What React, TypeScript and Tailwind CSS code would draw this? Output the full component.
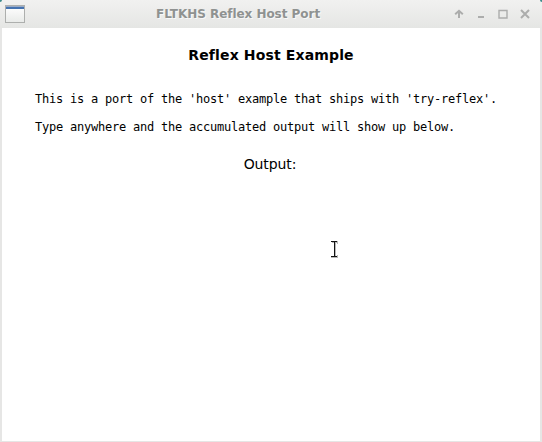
function TitleBar() {
  return (
    <header className="relative flex h-7 shrink-0 items-center justify-between bg-linear-to-b from-[#f1f1f0] to-[#e5e6e4] pl-[5px] pr-[11px]">
      <svg width="20" height="18" viewBox="0 0 20 18" shapeRendering="crispEdges">
        <defs>
          <linearGradient id="page" x1="0" y1="0" x2="0" y2="1">
            <stop offset="0" stopColor="#ffffff" />
            <stop offset="1" stopColor="#e9ebe9" />
          </linearGradient>
        </defs>
        <rect width="20" height="18" fill="#adafad" />
        <rect x="1" y="1" width="18" height="16" fill="url(#page)" />
        <rect x="1" y="1" width="18" height="1" fill="#9bacc6" />
        <rect x="1" y="2" width="18" height="2" fill="#4472b0" />
      </svg>
      <span className="mr-[2px] h-7 w-[164px] whitespace-nowrap text-left text-[12px] font-bold leading-7 tracking-[-0.04px] text-[#8f9291] [text-shadow:1px_1px_0_#f8f8f8]">
        FLTKHS Reflex Host Port
      </span>
      <svg width="78" height="12" viewBox="453 8 78 12" fill="none" stroke="#acadac" strokeWidth="2">
        <path d="M459 18V11M455.2 14.3L459 10.8L462.8 14.3" />
        <path d="M478 17H484" />
        <path d="M499 10.5H507V18H499Z" strokeWidth="1.4" />
        <path d="M521 10L529 18M529 10L521 18" />
      </svg>
      <i className="absolute left-0 top-0 size-[2px] rounded-br-full bg-[#3d8b8b]" />
      <i className="absolute right-0 top-0 size-[2px] rounded-bl-full bg-[#3d8b8b]" />
    </header>
  );
}

function TextCursor() {
  return (
    <svg className="absolute left-[329px] top-[239px]" width="11" height="21" viewBox="0 0 11 21" fill="none" shapeRendering="crispEdges">
      <path d="M3 3.5H9M2 18.5H9M6.5 4V18M8.5 2V5M8.5 16V19" stroke="#b8b8b8" strokeWidth="1" />
      <path d="M2 2.5H8M2 17.5H8M5.5 3V17" stroke="#111" strokeWidth="1" />
    </svg>
  );
}

export default function App() {
  return (
    <div className="relative flex h-[442px] w-[542px] flex-col overflow-hidden bg-[#e6e6e5] font-['DejaVu_Sans',sans-serif] text-black">
      <TitleBar />
      <main className="mb-px ml-[2px] mr-[2px] flex-1 bg-white">
        <h1 className="mt-[17px] text-center text-[14px] font-bold leading-5 tracking-[0.14px]">Reflex Host Example</h1>
        <div className="mt-5 whitespace-pre pl-[33px] font-['DejaVu_Sans_Mono',monospace] text-[12px] leading-7 tracking-[-0.225px]">
          <p>This is a port of the 'host' example that ships with 'try-reflex'.</p>
          <p>Type anywhere and the accumulated output will show up below.</p>
        </div>
        <h2 className="mt-[13px] pr-[2px] text-center text-[14px] leading-5 tracking-[-0.1px]">Output:</h2>
      </main>
      <TextCursor />
    </div>
  );
}
